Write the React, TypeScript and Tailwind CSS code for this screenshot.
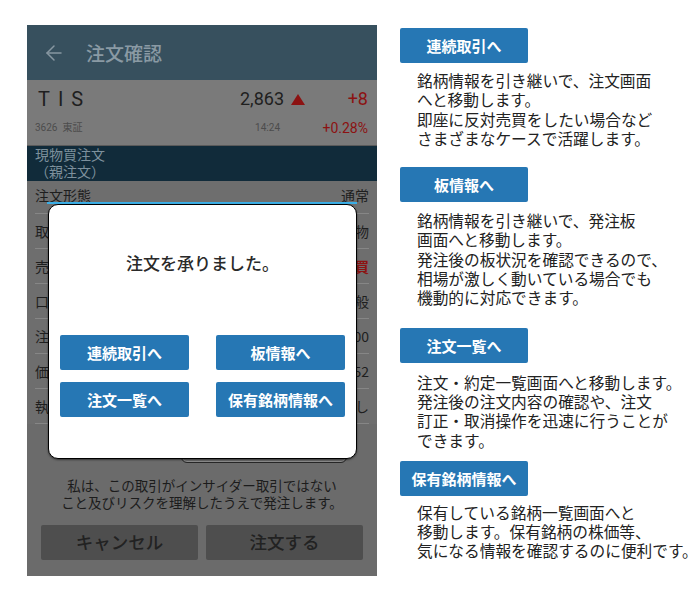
import React from "react";
import { ArrowLeft } from "lucide-react";

const JP = "font-['Noto_Sans_CJK_JP','Noto_Sans',sans-serif]";

const rows: { label: string; value: string; red?: boolean }[] = [
  { label: "取引区分", value: "現物" },
  { label: "売買区分", value: "買", red: true },
  { label: "口座区分", value: "一般" },
  { label: "注文数量", value: "100" },
  { label: "価格", value: "2,852" },
  { label: "執行条件", value: "なし" },
];

const blocks: { title: string; lines: string[]; btnMt: string; txtMt: string }[] = [
  {
    title: "連続取引へ",
    lines: [
      "銘柄情報を引き継いで、注文画面",
      "へと移動します。",
      "即座に反対売買をしたい場合など",
      "さまざまなケースで活躍します。",
    ],
    btnMt: "mt-0",
    txtMt: "mt-[8px]",
  },
  {
    title: "板情報へ",
    lines: [
      "銘柄情報を引き継いで、発注板",
      "画面へと移動します。",
      "発注後の板状況を確認できるので、",
      "相場が激しく動いている場合でも",
      "機動的に対応できます。",
    ],
    btnMt: "mt-[19px]",
    txtMt: "mt-[9px]",
  },
  {
    title: "注文一覧へ",
    lines: [
      "注文・約定一覧画面へと移動します。",
      "発注後の注文内容の確認や、注文",
      "訂正・取消操作を迅速に行うことが",
      "できます。",
    ],
    btnMt: "mt-[20px]",
    txtMt: "mt-[10px]",
  },
  {
    title: "保有銘柄情報へ",
    lines: [
      "保有している銘柄一覧画面へと",
      "移動します。保有銘柄の株価等、",
      "気になる情報を確認するのに便利です。",
    ],
    btnMt: "mt-[11px]",
    txtMt: "mt-[7px]",
  },
];

function BlueBtn({ label }: { label: string }) {
  return (
    <div className="h-[35px] bg-[#2677b4] rounded-[2px] flex items-center justify-center text-white text-[15px] font-bold leading-none">
      {label}
    </div>
  );
}

function Lines({ lines }: { lines: string[] }) {
  return (
    <>
      {lines.map((l, i) => (
        <React.Fragment key={i}>
          {l}
          {i < lines.length - 1 && <br />}
        </React.Fragment>
      ))}
    </>
  );
}

export default function App() {
  return (
    <div className={`w-[700px] h-[600px] bg-white flex pl-[27px] pt-[25px] ${JP}`}>
      {/* Phone */}
      <div className="relative w-[350px] h-[551px] bg-[#6b6b6b] flex flex-col">
        {/* header */}
        <div className="h-[55px] bg-[#37505e] flex items-center pl-[15px]">
          <ArrowLeft size={24} strokeWidth={1.5} className="text-[#8797a1]" />
          <span className="ml-[20px] text-[19px] text-[#8a9aa4] leading-none font-medium">注文確認</span>
        </div>
        {/* stock */}
        <div className="h-[65px] bg-[#7a7a7a] flex flex-col pl-[11px] pr-[9px]">
          <div className="h-[38px] flex items-center font-['Roboto','Noto_Sans_CJK_JP',sans-serif]">
            <span className="text-[20px] text-[#1f1f1f] tracking-[8px] leading-none">TIS</span>
            <div className="flex-1" />
            <span className="text-[18px] text-[#1f1f1f] leading-none">2,863</span>
            <svg width="14" height="11" viewBox="0 0 14 11" className="ml-[7px]">
              <polygon points="7,0 14,11 0,11" fill="#8c1212" />
            </svg>
            <span className="w-[63px] text-right text-[18px] text-[#8c1212] leading-none">+8</span>
          </div>
          <div className="h-[20px] flex items-center font-['Roboto','Noto_Sans_CJK_JP',sans-serif] -ml-[3px]">
            <span className="text-[10px] text-[#4c4c4c] leading-none">3626&nbsp;&nbsp;東証</span>
            <div className="flex-1" />
            <span className="text-[10px] text-[#4c4c4c] leading-none">14:24</span>
            <span className="w-[88px] text-right text-[14px] text-[#8c1212] leading-none">+0.28%</span>
          </div>
        </div>
        <div className="h-px bg-[#5a5a5a]" />
        {/* dark band */}
        <div className="h-[35px] bg-[#112b3a] pl-[8px] text-[14px] leading-[17px] text-[#7d909c]">
          現物買注文
          <br />
          （親注文）
        </div>
        {/* rows */}
        <div className="bg-[#6e6e6e] flex flex-col px-[8px] text-[14px] text-[#1e1e1e]">
          <div className="h-[33px] flex items-center justify-between border-b border-[#868686] pb-[4px]">
            <span>注文形態</span>
            <span>通常</span>
          </div>
          {rows.map((r) => (
            <div key={r.label} className="h-[35px] flex items-center justify-between border-b border-[#868686]">
              <span>{r.label}</span>
              <span className={r.red ? "text-[#8c1212] font-bold" : ""}>{r.value}</span>
            </div>
          ))}
        </div>
        {/* hidden area */}
        <div className="h-[40px] pl-[154px] pt-[7px]">
          <div className="w-[166px] h-[32px] border border-[#262626] rounded-[6px] bg-[#6e6e6e] shadow-[inset_0_-1px_0_#8a8a8a]" />
        </div>
        {/* notice */}
        <div className="mt-[13px] text-center text-[13.5px] leading-[17px] text-[#1c1c1c]">
          私は、この取引がインサイダー取引ではない
          <br />
          こと及びリスクを理解したうえで発注します。
        </div>
        <div className="mt-[14px] px-[14px] flex gap-[8px]">
          <div className="flex-1 h-[35px] bg-[#4e4e4e] rounded-[2px] flex items-center justify-center text-[17.5px] text-[#222] font-medium">
            キャンセル
          </div>
          <div className="flex-1 h-[35px] bg-[#4e4e4e] rounded-[2px] flex items-center justify-center text-[17.5px] text-[#222] font-medium">
            注文する
          </div>
        </div>

        {/* dialog overlay */}
        <div className="absolute left-[20px] top-[177px] w-[310px] h-[2px] bg-[#3aaee6]" />
        <div className="absolute left-[21px] top-[179px] w-[309px] h-[255px] bg-white border-[1.5px] border-black rounded-[10px] flex flex-col shadow-[0_1px_2px_rgba(0,0,0,0.5)]">
          <div className="mt-[46px] text-center text-[17px] leading-[24px] text-[#2a2a2a] font-medium">注文を承りました。</div>
          <div className="mt-[60px] px-[11px] grid grid-cols-2 gap-x-[27px] gap-y-[12px]">
            <BlueBtn label="連続取引へ" />
            <BlueBtn label="板情報へ" />
            <BlueBtn label="注文一覧へ" />
            <BlueBtn label="保有銘柄情報へ" />
          </div>
        </div>
      </div>

      {/* Right column */}
      <div className="ml-[23px] mt-[3px] flex flex-col w-[300px]">
        {blocks.map((b) => (
          <div key={b.title} className={`flex flex-col ${b.btnMt}`}>
            <div className="w-[128px]">
              <BlueBtn label={b.title} />
            </div>
            <div className={`${b.txtMt} pl-[17px] text-[15.7px] leading-[19.3px] text-[#222] whitespace-nowrap`}>
              <Lines lines={b.lines} />
            </div>
          </div>
        ))}
      </div>
    </div>
  );
}
